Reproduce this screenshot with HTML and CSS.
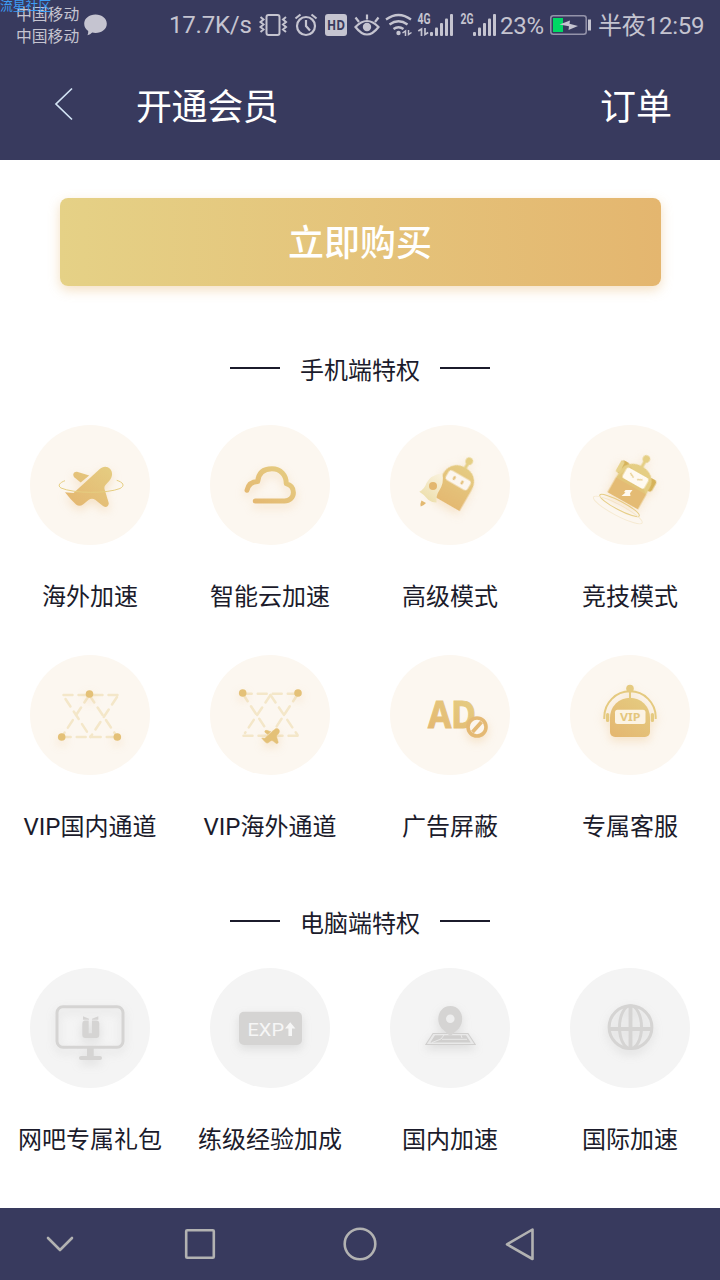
FILE: index.html
```html
<!DOCTYPE html>
<html lang="zh-CN">
<head>
<meta charset="utf-8">
<title>开通会员</title>
<link rel="stylesheet" href="styles.css">
</head>
<body>
<svg class="defs" width="0" height="0" aria-hidden="true">
  <defs>
    <linearGradient id="gold" gradientUnits="userSpaceOnUse" x1="75" y1="40" x2="43" y2="84">
      <stop offset="0" stop-color="#e5cc81"/><stop offset="1" stop-color="#e4b670"/>
    </linearGradient>
    <linearGradient id="bot" gradientUnits="userSpaceOnUse" x1="0" y1="-48" x2="0" y2="0">
      <stop offset="0" stop-color="#e5cf85"/><stop offset="1" stop-color="#e4b972"/>
    </linearGradient>
    <linearGradient id="rocket" x1="0.8" y1="0" x2="0.2" y2="1">
      <stop offset="0" stop-color="#f9f1dc"/><stop offset="1" stop-color="#ecdda7"/>
    </linearGradient>
    <g id="plane">
      <path d="M35 67.300L43.500 68 69.500 44.200C72.500 41 77.500 40.800 80 43.800 83 47.200 82.500 51.500 80 55L75.500 60Q74 61.700 74.500 64L78.600 77.500C79.300 80 77.500 82 75.500 82Q74 82 72 80.300L65.500 75Q62 72.600 58.500 75L53 79.500Q49.500 82 46 79.500Q40 74 35 67.300Z"/>
      <path d="M50.700 57.500L44.500 52.500C42 50 43.500 46.500 47 46.800L59.200 50.400Z"/>
    </g>
  </defs>
</svg>

<header class="top">
  <div class="status">
    <div class="watermark">流星社区</div>
    <div class="carriers"><span>中国移动</span><span>中国移动</span></div>
    <svg class="bubble" width="24" height="24" viewBox="84 13 24 24"><path d="M95.500 14.500c6.500 0 11.300 4 11.300 9.200s-4.900 9.300-11.300 9.300q-1.800 0-3.300-.4-1.900 2.100-4.700 2.700.9-1.500.7-4.200-4-2.800-4-7.300c0-5.300 4.900-9.300 11.300-9.300z" fill="#c5c4d0"/></svg>
    <span class="speed">17.7K/s</span>
    <div class="indicators">
      <svg width="34" height="30" viewBox="256 9 34 30" fill="none" stroke="#c5c4d0" stroke-width="2"><rect x="266.500" y="14" width="13" height="20" rx="2"/><path d="M260.500 16l3 2.500-3 2.500 3 2.500-3 2.500 3 2.500-3 2.500M286 16l-3 2.500 3 2.500-3 2.500 3 2.500-3 2.500 3 2.500"/></svg>
      <svg width="30" height="30" viewBox="290 9 30 30" fill="none" stroke="#c5c4d0" stroke-width="2.200"><circle cx="306" cy="25" r="9"/><path d="M306 19v6l4 4.500M295.500 17.500l5-4M316.500 17.500l-5-4"/></svg>
      <svg width="30" height="30" viewBox="320 9 30 30"><rect x="325" y="13" width="22" height="22" rx="3" fill="#c5c4d0"/><text class="hd" x="336" y="29" text-anchor="middle" textLength="18" lengthAdjust="spacingAndGlyphs">HD</text></svg>
      <svg width="32" height="30" viewBox="350 9 32 30" fill="none" stroke="#c5c4d0" stroke-width="2.200"><path d="M355.500 26q11.500-12 23 0-11.500 15-23 0zM367 18.500v-5M359 21l-3.500-4.500M375 21l3.500-4.500"/><circle cx="367" cy="26" r="4.200" fill="#c5c4d0" stroke="none"/></svg>
      <svg width="32" height="30" viewBox="382 9 32 30" fill="none" stroke="#c5c4d0" stroke-width="2.300"><path d="M386 18.500q12.500-9 25 0M389.500 23.500q9-6.500 18 0M393.500 28q5-3.500 10 0"/><circle cx="398.500" cy="32" r="2.200" fill="#c5c4d0" stroke="none"/><path d="M402.500 32l3-2v5M411.500 31.500l-3 2v-4.500" stroke-width="1.500"/></svg>
      <svg width="42" height="30" viewBox="414 9 42 30" fill="#c5c4d0"><text class="net" x="417.500" y="23" textLength="13" lengthAdjust="spacingAndGlyphs">4G</text><path d="M418.300 30l3.200-2v7M428.200 31.500l-3.200 2v-6.500" fill="none" stroke="#c5c4d0" stroke-width="1.700"/><rect x="430" y="31" width="3" height="4" rx="1"/><rect x="435" y="26.500" width="3" height="8.500" rx="1"/><rect x="440" y="22" width="3" height="13" rx="1"/><rect x="445" y="17.500" width="3" height="17.500" rx="1"/><rect x="450" y="13" width="3" height="22" rx="1"/></svg>
      <svg width="44" height="30" viewBox="456 9 44 30" fill="#c5c4d0"><text class="net" x="460.500" y="23" textLength="13" lengthAdjust="spacingAndGlyphs">2G</text><rect x="473" y="31" width="3" height="4" rx="1"/><rect x="478" y="26.500" width="3" height="8.500" rx="1"/><rect x="483" y="22" width="3" height="13" rx="1"/><rect x="488" y="17.500" width="3" height="17.500" rx="1"/><rect x="493" y="13" width="3" height="22" rx="1"/></svg>
    </div>
    <span class="percent">23%</span>
    <svg class="battery" width="44" height="30" viewBox="549 10 44 30"><rect x="550.800" y="15.800" width="35.400" height="18.400" rx="2.500" fill="none" stroke="#9493aa" stroke-width="1.500"/><path d="M553 18h10v14h-10z" fill="#00d964"/><path d="M588 19.500h3v11h-3z" fill="#c5c4d0"/><path d="M559.500 24.500l10.500-4-.5 3.200 8.500 2.300-9.500 4 .5-3.700z" fill="#c5c4d0"/></svg>
    <span class="clock">半夜12:59</span>
  </div>
  <div class="bar">
    <svg class="back" width="24" height="36" viewBox="52 87 24 36"><path d="M72 88.500L56 104l16 15.500" fill="none" stroke="#d3e4f5" stroke-width="1.700"/></svg>
    <h1 class="title">开通会员</h1>
    <span class="orders">订单</span>
  </div>
</header>

<main class="content">
  <button class="buy">立即购买</button>

  <h2 class="section mobile"><span>手机端特权</span></h2>
  <div class="grid">
    <div class="item">
      <svg class="icon gold" viewBox="0 0 120 120"><g class="glow"><use href="#plane" fill="url(#gold)"/></g><path d="M35 55.700C30 57.500 27 60.500 31 63 44 68.700 77 68.700 90 63.500 95.500 60.500 93 57.300 86.700 55.300" fill="none" stroke="#e5cd80" stroke-width="1"/></svg>
      <span>海外加速</span>
    </div>
    <div class="item">
      <svg class="icon gold" viewBox="0 0 120 120"><path class="glow" d="M37 65.300Q39 56.500 47.700 56.500C48.500 47 54 43.700 62 43.700C70.500 43.700 76.300 50 76.300 58.700C81 60 83.400 63.500 83.400 67.500C83.400 72.500 79.500 76 74.500 76H45.300" fill="none" stroke="url(#gold)" stroke-width="5" stroke-linecap="round" stroke-linejoin="round"/></svg>
      <span>智能云加速</span>
    </div>
    <div class="item">
      <svg class="icon gold" viewBox="0 0 120 120">
        <g class="glow" transform="translate(55.200 77.800) rotate(30)"><path d="M-16.500 0V-24C-16.500-35-9-40.500 0-40.500S16.500-35 16.500-24V0Z" fill="url(#bot)"/><path d="M0-40v-7" stroke="#e5cf85" stroke-width="3"/><circle cy="-48" r="3.700" fill="#e5cf85"/><rect x="-12.500" y="-31.500" width="25" height="11" rx="3" fill="#fcf6ee"/><ellipse cx="-4.500" cy="-26" rx="1.200" ry="2.300" fill="#e3bd74"/><ellipse cx="4.500" cy="-26" rx="1.200" ry="2.300" fill="#e3bd74"/></g>
        <path d="M52.300 48.300Q54.500 58 49 66Q46 70 46.500 77.500Q42 77.500 38.500 75Q34 69.500 29.300 66.800Q34.500 64 36.500 58Q40.500 50 52.300 48.300Z" fill="url(#rocket)"/><circle cx="43" cy="61" r="4" fill="#e3b76f"/><path d="M31.500 75.500l4.500 2.500q-2 2.500-5.300 3.500-.9-2.500.8-6z" fill="#e3b971"/>
      </svg>
      <span>高级模式</span>
    </div>
    <div class="item">
      <svg class="icon gold" viewBox="0 0 120 120">
        <g fill="none"><ellipse cx="49.500" cy="80.500" rx="22.300" ry="4.300" transform="rotate(28 49.500 80.500)" stroke="#e6cf87"/><ellipse cx="47.800" cy="85" rx="27.500" ry="5.500" transform="rotate(28 47.800 85)" stroke="#f6ead2"/></g>
        <g class="glow" transform="translate(52.700 75.800) rotate(29.500)"><rect x="-21" y="-36" width="10" height="14" rx="4" fill="#d6b35b"/><rect x="-21" y="-35" width="4" height="13" rx="2" fill="#e8d38d"/><rect x="12" y="-34" width="8.500" height="13" rx="3" fill="#d6b35b"/><path d="M-17.300 0V-24C-17.300-34-9-39.500 0-39.500S17.300-34 17.300-24V0Z" fill="#e5ce84"/><path d="M-17.300 0V-17H17.300V0Z" fill="#e4bb74"/><path d="M-17.300-17L-10-34 13-20 17.300-17Z" fill="#e2c579"/><path d="M0-39v-8" stroke="#e5cf85" stroke-width="3"/><circle cy="-48" r="3.700" fill="#e5cf85"/><rect x="-12.500" y="-32" width="25" height="12" rx="2.500" fill="#fffaf1"/><path d="M-7-28l5 2.500M7-28L2-25.500" stroke="#e3c57a" stroke-width="1.200"/></g>
        <path d="M55.500 65h7L60 68.300 60.500 71h-9l4-3.500-1.500-.5z" fill="#fffaf0"/>
      </svg>
      <span>竞技模式</span>
    </div>
    <div class="item">
      <svg class="icon gold" viewBox="0 0 120 120"><g fill="none" stroke="#f4e7c9" stroke-width="2.500" stroke-linecap="round" stroke-dasharray="9 6"><path d="M33.500 40H89"/><path d="M31.700 82H87.300"/><path d="M59.300 40L31.700 82"/><path d="M59.300 40L87.300 82"/><path d="M35.500 44L60.500 82"/><path d="M87 42L60.500 82"/></g><g class="glow" fill="#e4c178"><circle cx="59.500" cy="39" r="3.800"/><circle cx="31.700" cy="82" r="3.800"/><circle cx="87.300" cy="82" r="3.800"/></g></svg>
      <span>VIP国内通道</span>
    </div>
    <div class="item">
      <svg class="icon gold" viewBox="0 0 120 120"><g fill="none" stroke="#f4e7c9" stroke-width="2.500" stroke-linecap="round" stroke-dasharray="9 6"><path d="M32.700 38.700H88"/><path d="M33.500 80.700H87.500"/><path d="M32.700 38.700L60.500 80.700"/><path d="M88 38.700L60.500 80.700"/><path d="M60.500 40L35 78"/><path d="M60.500 40L87.500 80"/></g><g class="glow" fill="#e4c178"><circle cx="32.700" cy="38" r="3.800"/><circle cx="88" cy="38" r="3.800"/><use href="#plane" transform="translate(38.600 57.800) scale(.375)" stroke="#e4c178" stroke-width="1.500"/></g></svg>
      <span>VIP海外通道</span>
    </div>
    <div class="item">
      <svg class="icon gold" viewBox="0 0 120 120"><text class="ad" x="38" y="72.700" textLength="48" lengthAdjust="spacingAndGlyphs" fill="url(#gold)" stroke="url(#gold)">AD</text><g class="glow"><circle cx="87" cy="72" r="9" fill="#fcf6ee" stroke="#e4b974" stroke-width="3.600"/><path d="M82.500 77L91.500 67" stroke="#e4b974" stroke-width="3.800"/></g></svg>
      <span>广告屏蔽</span>
    </div>
    <div class="item">
      <svg class="icon gold" viewBox="0 0 120 120"><g class="glow"><path d="M40 62.700a20 20 0 0 1 40 0V77a5 5 0 0 1-5 5H45a5 5 0 0 1-5-5z" fill="url(#gold)"/><path d="M34.300 64V62a25.700 25.700 0 0 1 51.400 0v2M60 34v10" fill="none" stroke="#e5ca80" stroke-width="2"/><circle cx="60" cy="33.500" r="3.800" fill="#e5ca80"/><rect x="36" y="58" width="3.200" height="9" rx="1.500" fill="#e5ca80"/><rect x="80.800" y="58" width="3.200" height="9" rx="1.500" fill="#e5ca80"/></g><rect x="45" y="54.700" width="30.500" height="14.300" rx="2.500" fill="#fcf3e3"/><text class="vip" x="50" y="66" textLength="20.500" lengthAdjust="spacingAndGlyphs">VIP</text></svg>
      <span>专属客服</span>
    </div>
  </div>

  <h2 class="section desktop"><span>电脑端特权</span></h2>
  <div class="grid">
    <div class="item">
      <svg class="icon gray" viewBox="0 0 120 120"><g class="glow" fill="#d5d4d3"><rect x="27" y="38.800" width="66" height="40.500" rx="6" fill="none" stroke="#d5d4d3" stroke-width="3"/><path d="M57 80h6.700v8H57z"/><rect x="49" y="88" width="23" height="4" rx="2"/><path d="M54.500 52.500h4.200V65.300h3.200V52.500h4.400a3 3 0 0 1 3 3V67a3 3 0 0 1-3 3H55.300a3 3 0 0 1-3-3V55.500a3 3 0 0 1 2.200-3zM53 48.300l6 2.500v1h-6zM68.300 48.300l-6.300 2.500v1h6.300z"/></g></svg>
      <span>网吧专属礼包</span>
    </div>
    <div class="item">
      <svg class="icon gray" viewBox="0 0 120 120"><rect class="glow" x="29" y="43.800" width="63" height="33.200" rx="5" fill="#d5d4d3"/><text class="exp" x="37.500" y="68" textLength="36.500" lengthAdjust="spacingAndGlyphs">EXP</text><path d="M80.200 54.300l5.200 6.200h-3.400V68h-3.600v-7.500h-3.400z" fill="#f6f6f6"/></svg>
      <span>练级经验加成</span>
    </div>
    <div class="item">
      <svg class="icon gray" viewBox="0 0 120 120"><g class="glow"><path d="M43 65.500h35L85.200 76.500H35.900z" fill="#e9e9e9" stroke="#d0cfce" stroke-width="1.100"/><path d="M45 67.300h31l4.800 7.200H40.300z" fill="#d0cfce"/><path d="M42 74.500l9-3.500 3-4M52 71.300h25M71 67l1 3" fill="none" stroke="#efefef" stroke-width=".8"/><path d="M60.300 68.500Q58 66 52 60.800C44.500 52 49 38 60.300 38S76 52 68.700 60.800Q62.500 66 60.300 68.500z" fill="#d5d4d3"/><circle cx="60.300" cy="50.700" r="4.300" fill="#eee"/></g></svg>
      <span>国内加速</span>
    </div>
    <div class="item">
      <svg class="icon gray" viewBox="0 0 120 120"><g class="glow" fill="none" stroke="#d5d4d3" stroke-width="3"><circle cx="60.500" cy="59.200" r="21.400"/><ellipse cx="60.500" cy="59.200" rx="11" ry="21.400"/><path d="M60.500 38v42M39 61H82" stroke-width="3.900"/></g></svg>
      <span>国际加速</span>
    </div>
  </div>
</main>

<nav class="nav">
  <svg width="30" height="40" viewBox="45 1224 30 40"><path d="M48 1238l12 12 12-12"/></svg>
  <svg width="36" height="40" viewBox="182 1224 36 40"><rect x="186.200" y="1230.200" width="27.600" height="27.600" rx="1"/></svg>
  <svg width="36" height="40" viewBox="342 1224 36 40"><circle cx="360" cy="1244" r="15.300"/></svg>
  <svg width="36" height="40" viewBox="502 1224 36 40"><path d="M532.500 1229.500v29.500L507 1244.300z"/></svg>
</nav>
</body>
</html>
```
FILE: styles.css
```css
* { box-sizing: border-box; }

body {
  margin: 0;
  width: 720px;
  height: 1280px;
  display: flex;
  flex-direction: column;
  overflow: hidden;
  background: #fff;
  color: #1b1b2b;
  font-family: Roboto, "Noto Sans CJK SC", sans-serif;
}

svg { display: block; flex: none; }
.defs { position: absolute; }

.top { height: 160px; flex: none; background: #383a5e; color: #fff; }

.status {
  position: relative;
  display: flex;
  align-items: center;
  height: 50px;
  padding-left: 16px;
  color: #c5c4d0;
  font-size: 24px;
  line-height: 30px;
  white-space: nowrap;
}

.watermark {
  position: absolute;
  left: 0;
  top: -2px;
  color: #3c9cf4;
  font-size: 12.800px;
  line-height: 16px;
}

.carriers { display: flex; flex-direction: column; width: 68px; padding-top: 1px; font-size: 15.800px; line-height: 22px; }
.speed { width: 87px; margin-left: 61px; letter-spacing: -0.200px; }
.indicators { display: flex; }
.percent { width: 49px; padding-top: 1px; letter-spacing: -0.300px; }
.clock { margin-left: 5px; padding-top: 1px; letter-spacing: -0.200px; }

.hd { font: 700 14.500px "Open Sans", sans-serif; fill: #383a5e; }
.net { font: 700 14px Roboto, sans-serif; }

.bar { display: flex; align-items: center; height: 110px; padding: 0 48px 0 52px; }
.title { margin: 6px 0 0 60px; font-size: 36px; font-weight: 400; line-height: 50px; letter-spacing: -0.400px; }
.orders { margin: 6px 0 0 auto; font-size: 36px; line-height: 50px; }

.content { flex: none; height: 1048px; padding-top: 38px; }

.buy {
  display: block;
  width: 601px;
  height: 88px;
  margin: 0 0 0 59.500px;
  padding: 5px 0 0;
  border: 0;
  border-radius: 8px;
  background: linear-gradient(90deg, #e5d186, #e4b66f);
  box-shadow: 0 4px 12px rgba(228, 182, 111, 0.42);
  color: #fff;
  font: 500 36px/83px Roboto, "Noto Sans CJK SC", sans-serif;
}

.section {
  display: flex;
  align-items: center;
  justify-content: center;
  gap: 20px;
  height: 40px;
  margin: 0;
  font-size: 24px;
  font-weight: 400;
  line-height: 40px;
}
.section span { padding-top: 3px; }
.section::before, .section::after {
  content: "";
  width: 50px;
  height: 2px;
  margin-top: -2px;
  background: #1b1b2b;
}
.mobile { margin-top: 63px; margin-bottom: 36px; }
.desktop { margin-top: 17px; margin-bottom: 26px; }

.grid { display: grid; grid-template-columns: repeat(4, 180px); grid-auto-rows: 230px; }
.desktop + .grid { grid-auto-rows: 220px; }

.item {
  display: flex;
  flex-direction: column;
  align-items: center;
  gap: 34px;
  font-size: 24px;
  line-height: 36px;
  white-space: nowrap;
}

.icon { width: 120px; height: 120px; border-radius: 50%; }
.gold { background: #fcf7f0; }
.gray { background: #f4f4f4; }
.gold .glow { filter: drop-shadow(0 4px 5px rgba(232, 180, 105, 0.3)); }
.gray .glow { filter: drop-shadow(0 4px 5px rgba(130, 130, 130, 0.2)); }

.ad { font: 700 37.500px "Noto Sans", sans-serif; stroke-width: 1px; }
.vip { font: 700 11px "Noto Sans", sans-serif; fill: #e4c67d; }
.exp { font: 400 18px Roboto, sans-serif; fill: #f6f6f6; }

.nav {
  display: flex;
  align-items: center;
  flex: none;
  height: 72px;
  padding-left: 45px;
  background: #383a5e;
}
.nav svg { fill: none; stroke: #b2b2b2; stroke-width: 2.600; stroke-linejoin: round; stroke-linecap: round; }
.nav svg:nth-child(2) { margin-left: 107px; }
.nav svg:nth-child(n+3) { margin-left: 124px; }
```
